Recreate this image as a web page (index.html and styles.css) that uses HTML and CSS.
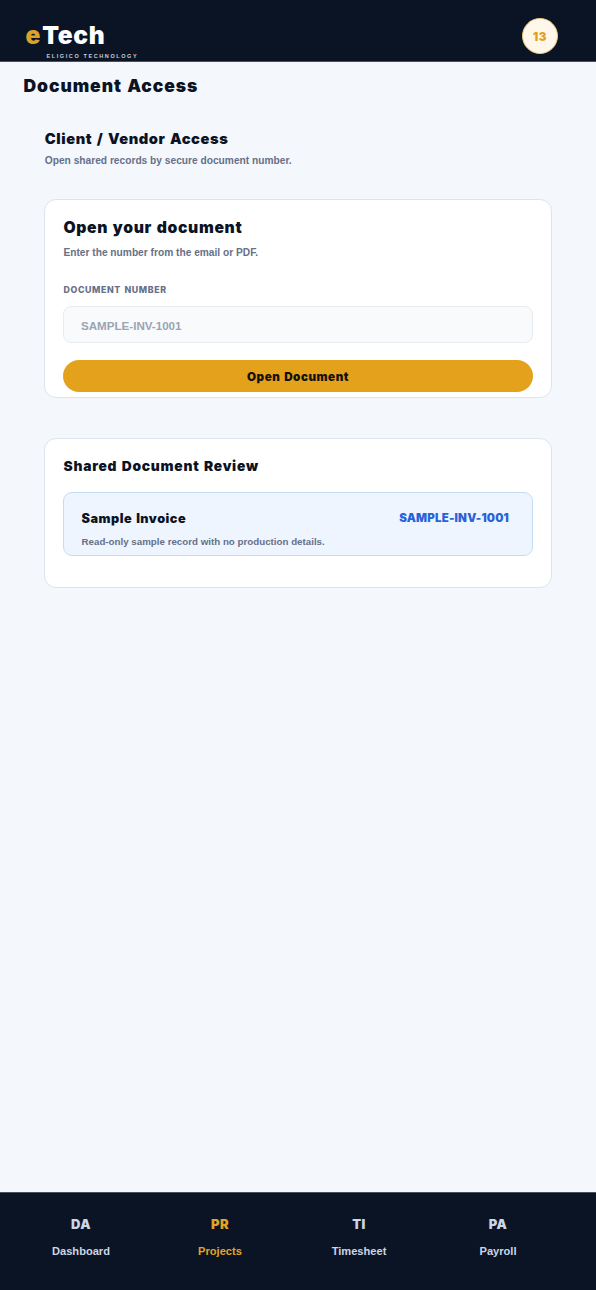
FILE: index.html
```html
<!DOCTYPE html>
<html lang="en">

<head>
    <meta charset="UTF-8">
    <meta name="viewport" content="width=device-width, initial-scale=1.0">
    <title>Document Access</title>
    <link rel="stylesheet" href="styles.css">
</head>

<body>
    <header class="topbar">
        <div class="brand">
            <div class="logo heavy"><span class="logo-e">e</span>Tech</div>
            <div class="tagline">ELIGICO TECHNOLOGY</div>
        </div>
        <div class="badge heavy">13</div>
    </header>

    <main class="content">
        <h1 class="page-title heavy">Document Access</h1>

        <section class="intro">
            <h2 class="intro-title heavy">Client / Vendor Access</h2>
            <p class="subtitle">Open shared records by secure document number.</p>
        </section>

        <section class="card open-card">
            <h2 class="card-title heavy">Open your document</h2>
            <p class="subtitle">Enter the number from the email or PDF.</p>
            <label class="field-label heavy" for="docNumber">DOCUMENT NUMBER</label>
            <input class="field" type="text" id="docNumber" placeholder="SAMPLE-INV-1001">
            <button class="open-btn heavy" type="button">Open Document</button>
        </section>

        <section class="card review-card">
            <h2 class="review-title heavy">Shared Document Review</h2>
            <div class="record">
                <div class="record-head">
                    <span class="record-name heavy">Sample Invoice</span>
                    <span class="record-number heavy">SAMPLE-INV-1001</span>
                </div>
                <p class="record-note">Read-only sample record with no production details.</p>
            </div>
        </section>
    </main>

    <nav class="bottom-nav">
        <a class="nav-item"><span class="nav-code heavy">DA</span><span>Dashboard</span></a>
        <a class="nav-item active"><span class="nav-code heavy">PR</span><span>Projects</span></a>
        <a class="nav-item"><span class="nav-code heavy">TI</span><span>Timesheet</span></a>
        <a class="nav-item"><span class="nav-code heavy">PA</span><span>Payroll</span></a>
    </nav>
</body>

</html>
```
FILE: styles.css
```css
* {
    box-sizing: border-box;
    margin: 0;
    padding: 0;
}

body {
    display: flex;
    flex-direction: column;
    height: 1290px;
    font-family: "Liberation Sans", Arial, sans-serif;
    font-weight: 700;
    background-color: #f4f7fc;
    color: #0b1324;
}

/* extra weight for headings and codes */
.heavy {
    font-family: Inter, "Liberation Sans", sans-serif;
    font-weight: 900;
    word-spacing: 1px;
}

.topbar {
    display: flex;
    justify-content: space-between;
    height: 62px;
    padding: 18px 38px 0 25.5px;
    background-color: #0b1424;
    border-bottom: 1px solid #4a5060;
}

.logo {
    margin-top: 2px;
    font-size: 24.5px;
    line-height: 30px;
    letter-spacing: 0.7px;
    color: #fff;
}

.logo-e {
    color: #dfa02a;
    letter-spacing: 1.8px;
}

.tagline {
    margin: 2px 0 0 21px;
    font-size: 5.5px;
    line-height: 8px;
    letter-spacing: 1.6px;
    color: #c3cede;
}

.badge {
    width: 36px;
    height: 36px;
    border: 1px solid #e9c77e;
    border-radius: 50%;
    background-color: #fff8ea;
    color: #e2a01c;
    font-size: 11.5px;
    line-height: 36px;
    letter-spacing: 0.6px;
    text-align: center;
}

.content {
    flex: 1;
    padding: 0 44px;
}

.page-title {
    margin: 13px 0 0 -20.5px;
    font-size: 17.5px;
    line-height: 22px;
    letter-spacing: 0.92px;
}

.intro {
    height: 103px;
    margin-top: 33px;
    padding-left: 0.8px;
}

.intro-title {
    font-size: 14.7px;
    line-height: 18px;
    letter-spacing: 0.58px;
}

.subtitle {
    margin-top: 6px;
    font-size: 10.2px;
    line-height: 14px;
    color: #667089;
}

.card {
    margin-top: -34px;
    padding: 0 18px;
    border: 1px solid #dce4f0;
    border-radius: 12px;
    background-color: #fff;
}

.open-card {
    height: 199px;
    padding-top: 18px;
}

.card-title {
    padding-left: 0.5px;
    font-size: 15.7px;
    line-height: 20px;
    letter-spacing: 0.65px;
}

.open-card .subtitle {
    margin-top: 8px;
    padding-left: 0.4px;
}

.field-label {
    display: block;
    margin-top: 23px;
    padding-left: 0.5px;
    font-size: 8.8px;
    line-height: 13px;
    font-weight: 800;
    letter-spacing: 0.62px;
    color: #667089;
}

.field {
    display: block;
    width: 100%;
    height: 37px;
    margin-top: 10px;
    padding: 2px 17px 0;
    border: 1px solid #e8ecf2;
    border-radius: 8px;
    background-color: #f8fafc;
    font: 700 11.6px "Liberation Sans", Arial, sans-serif;
}

.field::placeholder {
    color: #9aa4b5;
}

.open-btn {
    display: block;
    width: 100%;
    height: 31.5px;
    margin-top: 17px;
    padding-top: 2px;
    border: none;
    border-radius: 16px;
    background-color: #e3a11c;
    color: #14120f;
    font-size: 11.7px;
    letter-spacing: 0.5px;
}

.review-card {
    height: 150px;
    margin-top: 40px;
    padding-top: 18px;
}

.review-title {
    padding-left: 0.5px;
    font-size: 13.8px;
    line-height: 18px;
    letter-spacing: 0.75px;
}

.record {
    height: 64px;
    margin-top: 17px;
    padding: 17px 23px 0 17.5px;
    border: 1px solid #c5dcf6;
    border-radius: 9px;
    background-color: #eef5ff;
}

.record-head {
    display: flex;
    justify-content: space-between;
    line-height: 17px;
}

.record-name {
    font-size: 12.7px;
    letter-spacing: 0.5px;
}

.record-number {
    font-size: 11.5px;
    letter-spacing: 0.2px;
    color: #2962d9;
}

.record-note {
    margin-top: 8px;
    font-size: 9.75px;
    line-height: 13px;
    color: #667089;
}

.bottom-nav {
    display: flex;
    height: 98px;
    padding: 23px 28.5px 0 11.5px;
    background-color: #0b1424;
    border-top: 1px solid #4a5060;
}

.nav-item {
    display: flex;
    flex: 1;
    flex-direction: column;
    align-items: center;
    gap: 12px;
    color: #cbd5e5;
    font-size: 11.1px;
    line-height: 14px;
}

.nav-item.active {
    color: #e2a428;
}

.nav-code {
    font-size: 13px;
    line-height: 16px;
    letter-spacing: 0.5px;
}
```
